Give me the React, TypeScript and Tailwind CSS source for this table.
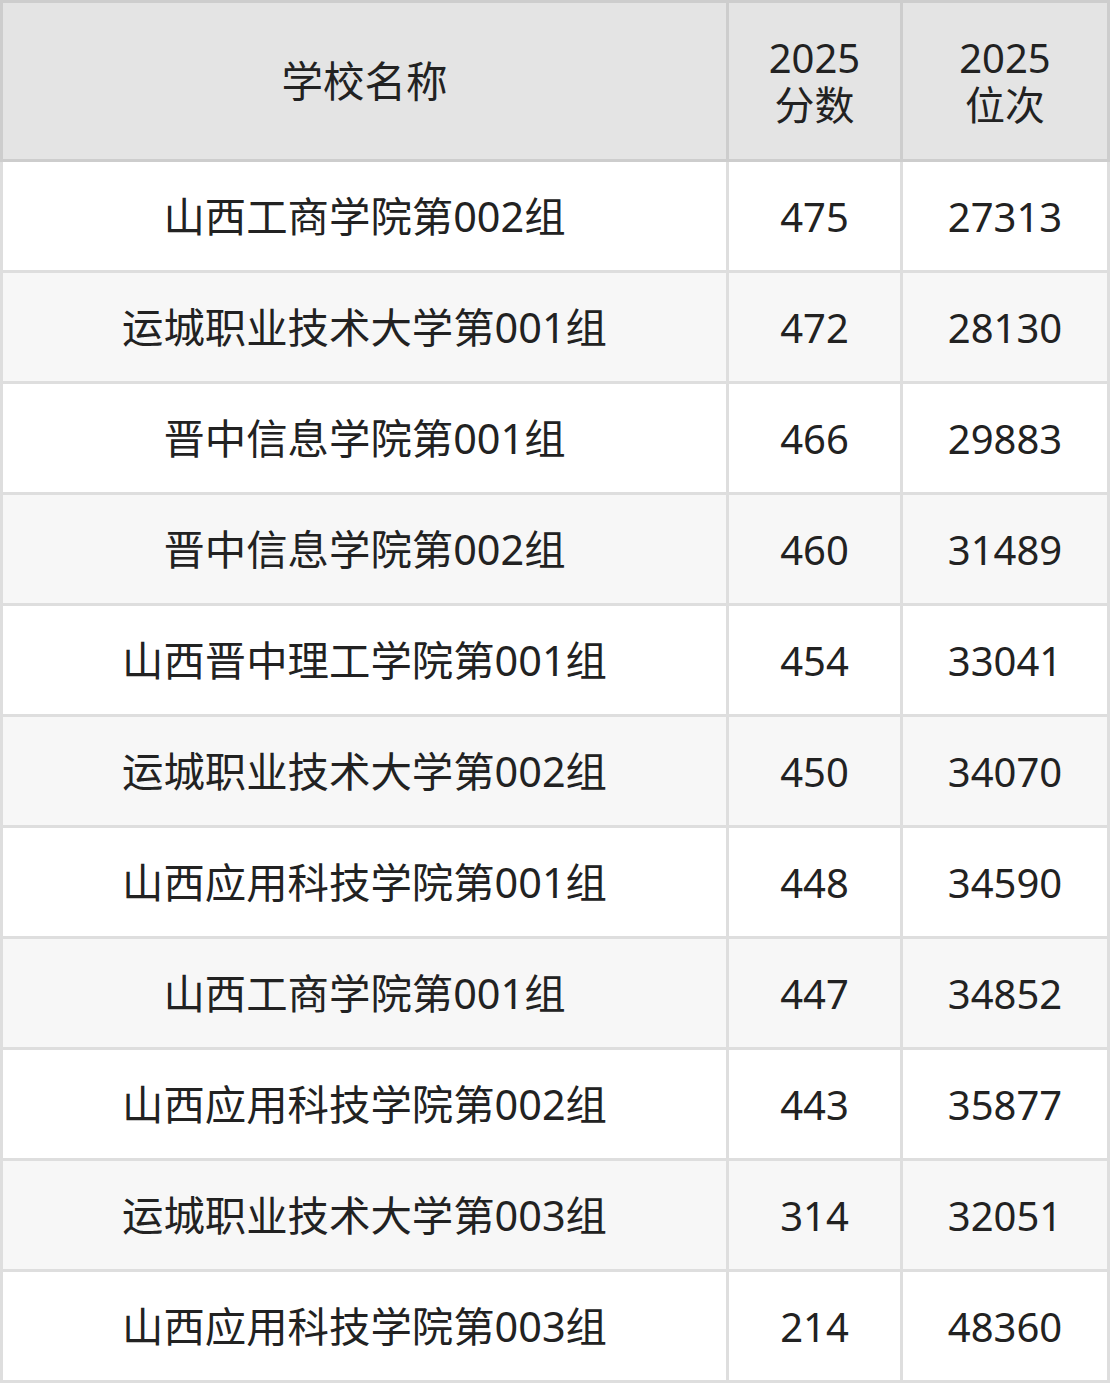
const rows = [
  ["山西工商学院第002组", "475", "27313"],
  ["运城职业技术大学第001组", "472", "28130"],
  ["晋中信息学院第001组", "466", "29883"],
  ["晋中信息学院第002组", "460", "31489"],
  ["山西晋中理工学院第001组", "454", "33041"],
  ["运城职业技术大学第002组", "450", "34070"],
  ["山西应用科技学院第001组", "448", "34590"],
  ["山西工商学院第001组", "447", "34852"],
  ["山西应用科技学院第002组", "443", "35877"],
  ["运城职业技术大学第003组", "314", "32051"],
  ["山西应用科技学院第003组", "214", "48360"],
];

export default function App() {
  return (
    <div
      className="w-[1110px] text-[40px] leading-[47px] text-[#222222]"
      style={{ fontFamily: '"Noto Sans", "Noto Sans CJK SC", sans-serif' }}
    >
      {/* 表头 */}
      <div className="grid grid-cols-[723px_171px_204px] gap-[3px] bg-[#cdcdcd] p-[3px]">
        <div className="flex h-[156px] items-center justify-center bg-[#e4e4e4] text-[41.5px]">
          学校名称
        </div>
        <div className="flex h-[156px] flex-col items-center justify-center bg-[#e4e4e4] text-center">
          <span>2025</span>
          <span>分数</span>
        </div>
        <div className="flex h-[156px] flex-col items-center justify-center bg-[#e4e4e4] text-center">
          <span>2025</span>
          <span>位次</span>
        </div>
      </div>

      {/* 内容 */}
      <div className="flex flex-col gap-[3px] bg-[#dedede] px-[3px] pb-[3px]">
        {rows.map((row, i) => (
          <div
            key={i}
            className="grid grid-cols-[723px_171px_204px] gap-[3px]"
          >
            {row.map((cell, j) => (
              <div
                key={j}
                className={`flex h-[108px] items-center justify-center ${
                  j === 0 ? "text-[41.4px]" : ""
                } ${i % 2 === 1 ? "bg-[#f7f7f7]" : "bg-white"}`}
              >
                {cell}
              </div>
            ))}
          </div>
        ))}
      </div>
    </div>
  );
}
